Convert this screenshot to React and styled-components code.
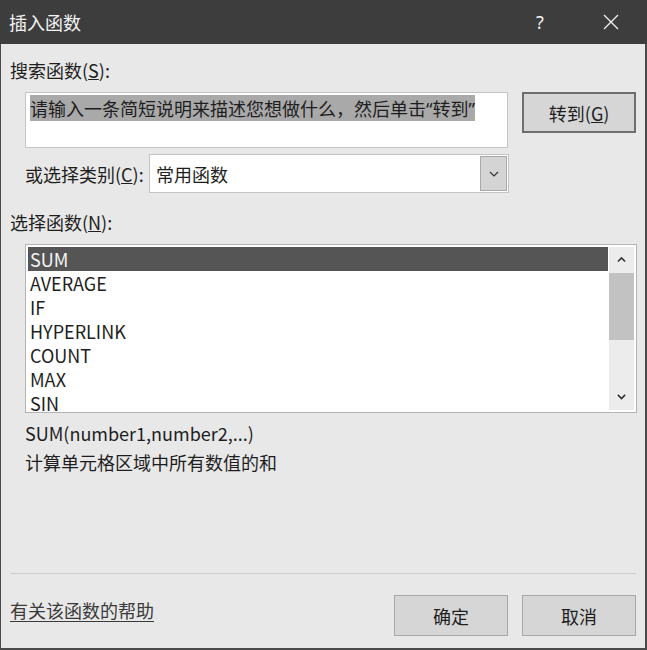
import { createGlobalStyle, styled } from "styled-components";

const GlobalStyle = createGlobalStyle`
  html, body {
    margin: 0;
    padding: 0;
    background: #e8e8e8;
  }
  * {
    box-sizing: border-box;
  }
`;

const FONT = `"Noto Sans CJK SC", "Noto Sans", sans-serif`;

const FUNCTIONS = ["SUM", "AVERAGE", "IF", "HYPERLINK", "COUNT", "MAX", "SIN"];

const Chevron = ({ dir = "down", size = 10, weight = 1.2 }) => (
  <svg width={size} height={size * 0.6} viewBox="0 0 10 6">
    <polyline
      points={dir === "down" ? "1,1 5,5 9,1" : "1,5 5,1 9,5"}
      fill="none"
      stroke="#333"
      strokeWidth={weight}
    />
  </svg>
);

const App = () => {
  return (
    <>
      <GlobalStyle />
      <Dialog>
        <TitleBar>
          <Title>插入函数</Title>
          <TitleActions>
            <HelpMark>?</HelpMark>
            <CloseIcon>
              <svg width="16" height="16" viewBox="0 0 16 16">
                <path d="M1 1 L15 15 M15 1 L1 15" stroke="#f2f2f2" strokeWidth="1.3" />
              </svg>
            </CloseIcon>
          </TitleActions>
        </TitleBar>
        <Body>
          <Label $top={14} $bottom={10}>
            搜索函数(<u>S</u>):
          </Label>
          <SearchRow>
            <SearchBox>
              <Selected>
                请输入一条简短说明来描述您想做什么，然后单击<Quote>“</Quote>转到<Quote>”</Quote>
              </Selected>
            </SearchBox>
            <Button $primary>
              转到(<u>G</u>)
            </Button>
          </SearchRow>
          <CategoryRow>
            <CategoryLabel>
              或选择类别(<u>C</u>):
            </CategoryLabel>
            <Select>
              <SelectValue>常用函数</SelectValue>
              <SelectArrow>
                <Chevron />
              </SelectArrow>
            </Select>
          </CategoryRow>
          <Label $top={17} $bottom={10}>
            选择函数(<u>N</u>):
          </Label>
          <ListBox>
            <ListItems>
              {FUNCTIONS.map((name, i) => (
                <ListItem key={name} $active={i === 0}>
                  {name}
                </ListItem>
              ))}
            </ListItems>
            <ScrollBar>
              <ScrollArrow>
                <Chevron dir="up" size={9} weight={1.8} />
              </ScrollArrow>
              <ScrollTrack>
                <ScrollThumb />
              </ScrollTrack>
              <ScrollArrow>
                <Chevron size={9} weight={1.8} />
              </ScrollArrow>
            </ScrollBar>
          </ListBox>
          <InfoText $top={8}>SUM(number1,number2,...)</InfoText>
          <InfoText $top={5}>计算单元格区域中所有数值的和</InfoText>
          <Spacer />
          <Separator />
          <Footer>
            <HelpLink>有关该函数的帮助</HelpLink>
            <FooterButtons>
              <Button>确定</Button>
              <Button>取消</Button>
            </FooterButtons>
          </Footer>
        </Body>
      </Dialog>
    </>
  );
};

const Dialog = styled.div`
  width: 647px;
  height: 650px;
  display: flex;
  flex-direction: column;
  background: #e8e8e8;
  border-left: 1px solid #4a4a4a;
  border-right: 2px solid #4a4a4a;
  border-bottom: 2px solid #4a4a4a;
  font-family: ${FONT};
  color: #1e1e1e;
`;

const TitleBar = styled.div`
  height: 44px;
  flex-shrink: 0;
  background: #3d3d3d;
  display: flex;
  align-items: center;
  justify-content: space-between;
  padding-left: 9px;
  margin: 0 -2px 0 -1px;
`;

const Title = styled.div`
  color: #f2f2f2;
  font-size: 18px;
  line-height: 24px;
`;

const TitleActions = styled.div`
  display: flex;
  align-items: center;
  height: 100%;
`;

const HelpMark = styled.div`
  color: #f2f2f2;
  font-family: "Noto Sans", sans-serif;
  font-size: 18px;
  width: 46px;
  text-align: center;
  margin-right: 24px;
`;

const CloseIcon = styled.div`
  width: 60px;
  height: 100%;
  display: flex;
  align-items: center;
  justify-content: center;
  padding-right: 12px;
`;

const Body = styled.div`
  flex: 1;
  display: flex;
  flex-direction: column;
  padding: 0 9px 12px 9px;
`;

const Label = styled.div`
  font-size: 18px;
  line-height: 24px;
  height: 24px;
  margin-top: ${({ $top }) => $top}px;
  margin-bottom: ${({ $bottom }) => $bottom}px;
  white-space: nowrap;
`;

const SearchRow = styled.div`
  display: flex;
  align-items: flex-start;
  padding-left: 15px;
`;

const SearchBox = styled.div`
  width: 484px;
  height: 56px;
  background: #fff;
  border: 1px solid #c4c4c4;
  padding: 4px 0 0 4px;
  font-size: 18px;
  line-height: 23px;
  white-space: nowrap;
  overflow: hidden;
`;

const Selected = styled.span`
  background: #a9a9a9;
  color: #1e1e1e;
`;

const Quote = styled.span`
  font-family: "Noto Sans", sans-serif;
`;

const Button = styled.div`
  width: 114px;
  height: 41px;
  display: flex;
  align-items: center;
  justify-content: center;
  background: #d6d6d6;
  border: ${({ $primary }) => ($primary ? "2px solid #6e6e6e" : "1px solid #a8a8a8")};
  font-size: 18px;
  color: #1e1e1e;
  margin-left: ${({ $primary }) => ($primary ? "14px" : "0")};
`;

const CategoryRow = styled.div`
  display: flex;
  align-items: center;
  margin-top: 6px;
  padding-left: 15px;
`;

const CategoryLabel = styled.div`
  width: 124px;
  font-size: 18px;
  line-height: 24px;
  white-space: nowrap;
`;

const Select = styled.div`
  width: 360px;
  height: 39px;
  display: flex;
  align-items: stretch;
  background: #fff;
  border: 1px solid #c4c4c4;
`;

const SelectValue = styled.div`
  flex: 1;
  display: flex;
  align-items: center;
  padding-left: 6px;
  font-size: 18px;
`;

const SelectArrow = styled.div`
  width: 27px;
  margin: 1px;
  display: flex;
  align-items: center;
  justify-content: center;
  background: #d4d4d4;
  border: 1px solid #a9a9a9;
`;

const ListBox = styled.div`
  margin-left: 15px;
  width: 612px;
  height: 169px;
  display: flex;
  background: #fff;
  border: 1px solid #b4b4b4;
  padding: 2px 2px 0 2px;
`;

const ListItems = styled.div`
  flex: 1;
  overflow: hidden;
`;

const ListItem = styled.div`
  height: 24px;
  line-height: 24px;
  padding-left: 2px;
  font-size: 18px;
  background: ${({ $active }) => ($active ? "#555555" : "transparent")};
  color: ${({ $active }) => ($active ? "#f4f4f4" : "#1e1e1e")};
`;

const ScrollBar = styled.div`
  width: 25px;
  margin: 0 0 2px 1px;
  display: flex;
  flex-direction: column;
  background: #ececec;
`;

const ScrollArrow = styled.div`
  height: 26px;
  display: flex;
  align-items: center;
  justify-content: center;
`;

const ScrollTrack = styled.div`
  flex: 1;
`;

const ScrollThumb = styled.div`
  height: 67px;
  background: #c2c2c2;
`;

const InfoText = styled.div`
  margin-top: ${({ $top }) => $top}px;
  padding-left: 15px;
  font-size: 18px;
  line-height: 24px;
  white-space: nowrap;
`;

const Spacer = styled.div`
  flex: 1;
`;

const Separator = styled.div`
  height: 1px;
  background: #cdcdcd;
`;

const Footer = styled.div`
  display: flex;
  align-items: center;
  justify-content: space-between;
  margin-top: 21px;
`;

const HelpLink = styled.a`
  font-size: 18px;
  color: #3a3a3a;
  text-decoration: underline;
  text-underline-offset: 3px;
  margin-top: -12px;
`;

const FooterButtons = styled.div`
  display: flex;
  gap: 14px;
`;

export default App;
